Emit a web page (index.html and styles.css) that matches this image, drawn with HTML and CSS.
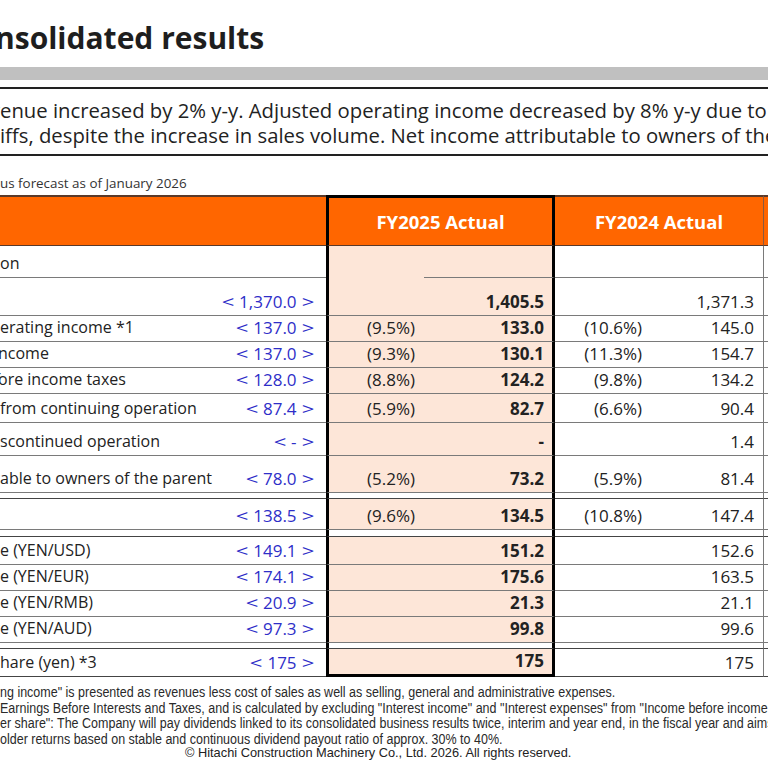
FILE: index.html
```html
<!DOCTYPE html>
<html lang="en">
<head>
    <meta charset="UTF-8">
    <title>Consolidated results</title>
    <link rel="stylesheet" href="styles.css">
</head>
<body>
<div class="slide">
    <h1 class="title"><span class="line"><span class="lead">1. Co</span><span class="shift-5">nsolidated results</span></span></h1>
    <div class="rule"></div>

    <div class="summary">
        <div class="line"><span class="lead">Rev</span><span>enue increased by 2% y-y. Adjusted operating income decreased by 8% y-y due to the impact of U.S.</span></div>
        <div class="line"><span class="lead">the impact of U.S. tar</span><span>iffs, despite the increase in sales volume. Net income attributable to owners of the parent decreased.</span></div>
    </div>

    <div class="note line"><span class="lead">&lt; &gt;: Previo</span><span>us forecast as of January 2026</span></div>

    <table class="results">
        <colgroup>
            <col class="c-label">
            <col class="c-forecast">
            <col class="c-pct25">
            <col class="c-val25">
            <col class="c-pct24">
            <col class="c-val24">
            <col class="c-next">
        </colgroup>
        <thead>
        <tr>
            <th colspan="2"></th>
            <th colspan="2" class="current">FY2025 Actual</th>
            <th colspan="2" class="prior">FY2024 Actual</th>
            <th class="next"></th>
        </tr>
        </thead>
        <tbody>
        <tr class="h32">
            <td><div class="line"><span class="lead">Classificati</span><span>on</span></div></td>
            <td class="forecast"></td>
            <td class="pct cur open"></td>
            <td class="val cur"></td>
            <td class="pct"></td>
            <td class="val prev"></td>
            <td></td>
        </tr>
        <tr class="h38">
            <td><div class="line"><span class="lead">Revenue</span></div></td>
            <td class="forecast"><span class="ang">&lt;</span> 1,370.0 <span class="ang">&gt;</span></td>
            <td class="pct cur"></td>
            <td class="val cur">1,405.5</td>
            <td class="pct"></td>
            <td class="val prev">1,371.3</td>
            <td></td>
        </tr>
        <tr class="h26">
            <td><div class="line"><span class="lead">Adjusted op</span><span>erating income *1</span></div></td>
            <td class="forecast"><span class="ang">&lt;</span> 137.0 <span class="ang">&gt;</span></td>
            <td class="pct cur">(9.5%)</td>
            <td class="val cur">133.0</td>
            <td class="pct">(10.6%)</td>
            <td class="val prev">145.0</td>
            <td></td>
        </tr>
        <tr class="h26">
            <td><div class="line"><span class="lead">Operating i</span><span class="shift-2">ncome</span></div></td>
            <td class="forecast"><span class="ang">&lt;</span> 137.0 <span class="ang">&gt;</span></td>
            <td class="pct cur">(9.3%)</td>
            <td class="val cur">130.1</td>
            <td class="pct">(11.3%)</td>
            <td class="val prev">154.7</td>
            <td></td>
        </tr>
        <tr class="h26">
            <td><div class="line"><span class="lead">Income bef</span><span class="shift-2">ore income taxes</span></div></td>
            <td class="forecast"><span class="ang">&lt;</span> 128.0 <span class="ang">&gt;</span></td>
            <td class="pct cur">(8.8%)</td>
            <td class="val cur">124.2</td>
            <td class="pct">(9.8%)</td>
            <td class="val prev">134.2</td>
            <td></td>
        </tr>
        <tr class="h29">
            <td><div class="line"><span class="lead">Net income </span><span>from continuing operation</span></div></td>
            <td class="forecast"><span class="ang">&lt;</span> 87.4 <span class="ang">&gt;</span></td>
            <td class="pct cur">(5.9%)</td>
            <td class="val cur">82.7</td>
            <td class="pct">(6.6%)</td>
            <td class="val prev">90.4</td>
            <td></td>
        </tr>
        <tr class="h33">
            <td><div class="line"><span class="lead">Net income from di</span><span>scontinued operation</span></div></td>
            <td class="forecast"><span class="ang">&lt;</span> - <span class="ang">&gt;</span></td>
            <td class="pct cur"></td>
            <td class="val cur">-</td>
            <td class="pct"></td>
            <td class="val prev">1.4</td>
            <td></td>
        </tr>
        <tr class="h37">
            <td><div class="line"><span class="lead">Net income attribut</span><span>able to owners of the parent</span></div></td>
            <td class="forecast"><span class="ang">&lt;</span> 78.0 <span class="ang">&gt;</span></td>
            <td class="pct cur">(5.2%)</td>
            <td class="val cur">73.2</td>
            <td class="pct">(5.9%)</td>
            <td class="val prev">81.4</td>
            <td></td>
        </tr>
        <tr class="gap">
            <td></td><td></td><td class="pct cur"></td><td class="val cur"></td><td></td><td class="val prev"></td><td></td>
        </tr>
        <tr class="h31">
            <td><div class="line"><span class="lead">EBIT *2</span></div></td>
            <td class="forecast"><span class="ang">&lt;</span> 138.5 <span class="ang">&gt;</span></td>
            <td class="pct cur">(9.6%)</td>
            <td class="val cur">134.5</td>
            <td class="pct">(10.8%)</td>
            <td class="val prev">147.4</td>
            <td></td>
        </tr>
        <tr class="gap gap-7">
            <td></td><td></td><td class="pct cur"></td><td class="val cur"></td><td></td><td class="val prev"></td><td></td>
        </tr>
        <tr class="h28">
            <td><div class="line"><span class="lead">Exchange rat</span><span>e (YEN/USD)</span></div></td>
            <td class="forecast"><span class="ang">&lt;</span> 149.1 <span class="ang">&gt;</span></td>
            <td class="pct cur"></td>
            <td class="val cur">151.2</td>
            <td class="pct"></td>
            <td class="val prev">152.6</td>
            <td></td>
        </tr>
        <tr class="h26">
            <td><div class="line"><span class="lead">Exchange rat</span><span>e (YEN/EUR)</span></div></td>
            <td class="forecast"><span class="ang">&lt;</span> 174.1 <span class="ang">&gt;</span></td>
            <td class="pct cur"></td>
            <td class="val cur">175.6</td>
            <td class="pct"></td>
            <td class="val prev">163.5</td>
            <td></td>
        </tr>
        <tr class="h26">
            <td><div class="line"><span class="lead">Exchange rat</span><span>e (YEN/RMB)</span></div></td>
            <td class="forecast"><span class="ang">&lt;</span> 20.9 <span class="ang">&gt;</span></td>
            <td class="pct cur"></td>
            <td class="val cur">21.3</td>
            <td class="pct"></td>
            <td class="val prev">21.1</td>
            <td></td>
        </tr>
        <tr class="h26">
            <td><div class="line"><span class="lead">Exchange rat</span><span>e (YEN/AUD)</span></div></td>
            <td class="forecast"><span class="ang">&lt;</span> 97.3 <span class="ang">&gt;</span></td>
            <td class="pct cur"></td>
            <td class="val cur">99.8</td>
            <td class="pct"></td>
            <td class="val prev">99.6</td>
            <td></td>
        </tr>
        <tr class="gap">
            <td></td><td></td><td class="pct cur"></td><td class="val cur"></td><td></td><td class="val prev"></td><td></td>
        </tr>
        <tr class="h27 last">
            <td><div class="line"><span class="lead">Dividends per s</span><span>hare (yen) *3</span></div></td>
            <td class="forecast"><span class="ang">&lt;</span> 175 <span class="ang">&gt;</span></td>
            <td class="pct cur"></td>
            <td class="val cur">175</td>
            <td class="pct"></td>
            <td class="val prev">175</td>
            <td></td>
        </tr>
        </tbody>
    </table>

    <div class="footnotes">
        <div class="line"><span class="lead">*1 "Adjusted operati</span><span>ng income" is presented as revenues less cost of sales as well as selling, general and administrative expenses.</span></div>
        <div class="line"><span class="lead">*2 "EBIT" is </span><span>Earnings Before Interests and Taxes, and is calculated by excluding "Interest income" and "Interest expenses" from "Income before income taxes".</span></div>
        <div class="line"><span class="lead">*3 "Dividends p</span><span>er share": The Company will pay dividends linked to its consolidated business results twice, interim and year end, in the fiscal year and aims to enhance</span></div>
        <div class="line"><span class="lead">shareh</span><span>older returns based on stable and continuous dividend payout ratio of approx. 30% to 40%.</span></div>
    </div>
    <div class="copyright">© Hitachi Construction Machinery Co., Ltd. 2026. All rights reserved.</div>
</div>
</body>
</html>
```

FILE: styles.css
```css
body {
    margin: 0;
    background: #fff;
}

.slide {
    width: 768px;
    height: 768px;
    overflow: hidden;
    font-family: "Open Sans", "Noto Sans", sans-serif;
    color: #222;
}

/* text whose start lies left of the visible slide */
.line {
    display: flex;
    white-space: nowrap;
}

.lead {
    width: 0;
    display: flex;
    justify-content: flex-end;
    white-space: nowrap;
}

.shift-2 {
    margin-left: -2px;
}

.shift-5 {
    margin-left: -5px;
}

.title {
    margin: 0;
    height: 67px;
    box-sizing: border-box;
    padding-top: 18px;
    font-size: 30px;
    line-height: 40px;
    font-weight: 700;
    color: #1e1e1e;
}

.rule {
    height: 13px;
    background-color: #c0c0c0;
}

.summary {
    margin-top: 7px;
    border-top: 2px solid #222;
    border-bottom: 2px solid #222;
    padding: 9px 0 6px;
    font-size: 20.3px;
    line-height: 25px;
}

.note {
    margin-top: 18px;
    font-size: 13.4px;
    line-height: 18px;
    color: #333;
}

.results {
    margin-top: 3px;
    table-layout: fixed;
    width: 824px;
    border-collapse: separate;
    border-spacing: 0;
    font-size: 17px;
    line-height: 23px;
}

.c-label { width: 214px; }
.c-forecast { width: 112px; }
.c-pct25 { width: 98px; }
.c-val25 { width: 131px; }
.c-pct24 { width: 97px; }
.c-val24 { width: 112px; }
.c-next { width: 60px; }

.results th {
    height: 42px;
    padding: 0 0 5px;
    background-color: #ff6600;
    color: #fff;
    font-size: 18.5px;
    font-weight: 700;
    text-align: center;
    vertical-align: bottom;
    line-height: 36px;
    border-top: 2px solid #5a3a2a;
    border-bottom: 1px solid #5a3a2a;
}

.results th.current {
    border: 3px solid #000;
    border-bottom: 1px solid #5a3a2a;
}

.results th.prior {
    border-right: 1px solid #8a5a40;
}

.results td {
    padding: 0 0 2px;
    vertical-align: bottom;
    white-space: nowrap;
    border-bottom: 1px solid #7a7a7a;
}

.results td .line {
    font-size: 16px;
}

.forecast {
    text-align: right;
    padding-right: 11px !important;
    color: #2e2ec8;
}

.ang {
    display: inline-block;
    width: 14px;
    text-align: center;
    transform: scaleX(1.3);
}

.pct {
    text-align: right;
    padding-right: 10px !important;
}

.val {
    text-align: right;
}

.cur {
    background-color: #fde6d8;
}

.pct.cur {
    border-left: 3px solid #000;
    padding-right: 9px !important;
}

.val.cur {
    border-right: 3px solid #000;
    padding-right: 8px !important;
    font-weight: 700;
}

.val.prev {
    border-right: 1px solid #7a7a7a;
    padding-right: 9px !important;
}

.pct.open {
    border-bottom: none !important;
}

.h26 { height: 26px; }
.h27 { height: 27px; }
.h28 { height: 28px; }
.h29 { height: 29px; }
.h31 { height: 31px; }
.h32 { height: 32px; }
.h33 { height: 33px; }
.h37 { height: 37px; }
.h38 { height: 38px; }

.gap {
    height: 6px;
}

.gap-7 {
    height: 7px;
}

.gap td {
    padding: 0;
    background-color: #fff;
    border-bottom: 1px solid #444;
}

.results tr.last td {
    border-bottom: 1px solid #444;
}

.results tr.last td.cur {
    border-bottom: 3px solid #000;
}

.footnotes {
    margin-top: 8px;
    width: 900px;
    font-family: "Liberation Sans", Arial, sans-serif;
    font-size: 14px;
    line-height: 15.5px;
    color: #2a2a2a;
    transform: scaleX(0.893);
    transform-origin: left top;
}

.copyright {
    padding-left: 185px;
    font-family: "Liberation Sans", Arial, sans-serif;
    font-size: 12.8px;
    line-height: 12px;
    color: #222;
}
```
